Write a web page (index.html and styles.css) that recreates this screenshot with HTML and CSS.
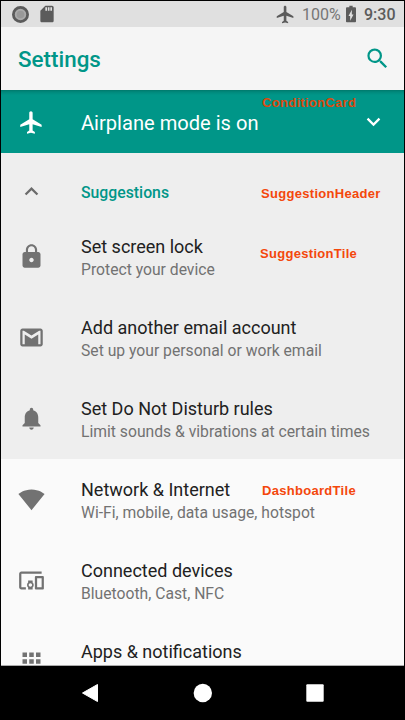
FILE: index.html
```html
<!DOCTYPE html>
<html lang="en">
<head>
<meta charset="utf-8">
<title>Settings</title>
<link rel="stylesheet" href="styles.css">
</head>
<body>
<div class="phone">
  <header class="status">
    <svg class="ring" viewBox="0 0 16 16"><circle cx="8" cy="8" r="6.7" fill="#aaa" stroke="#5b5b5b" stroke-width="2.6"/><circle cx="8" cy="8" r="3.6" fill="#999"/></svg>
    <svg class="sd" viewBox="0 0 24 24"><path d="M18 2h-8L4.020 8 4 20c0 1.100.9 2 2 2h12c1.100 0 2-.9 2-2V4c0-1.100-.9-2-2-2zm-6 6h-2V4h2v4zm3 0h-2V4h2v4zm3 0h-2V4h2v4z"/></svg>
    <svg class="plane-small" viewBox="0 0 24 24"><path d="M21 16v-2l-8-5V3.500C13 2.670 12.330 2 11.500 2S10 2.670 10 3.500V9l-8 5v2l8-2.500V19l-2 1.500V22l3.500-1 3.500 1v-1.500L13 19v-5.500z"/></svg>
    <span class="percent">100%</span>
    <svg class="battery" viewBox="0 0 24 24"><path d="M16.670 4H14V2h-4v2H7.330C6.600 4 6 4.600 6 5.330v15.330C6 21.400 6.600 22 7.330 22h9.330c.74 0 1.340-.6 1.340-1.330V5.330C18 4.600 17.400 4 16.670 4zM11 20v-5.500H9L13 7v5.500h2L11 20z"/></svg>
    <span class="clock">9:30</span>
  </header>
  <div class="appbar">
    <h1>Settings</h1>
    <svg class="icon" viewBox="0 0 24 24"><path d="M15.500 14h-.79l-.28-.27A6.470 6.470 0 0 0 16 9.500 6.500 6.500 0 1 0 9.500 16c1.610 0 3.090-.59 4.230-1.570l.27.28v.79l5 4.990L20.490 19l-4.990-5zm-6 0C7.010 14 5 11.990 5 9.500S7.010 5 9.500 5 14 7.010 14 9.500 11.990 14 9.500 14z"/></svg>
  </div>
  <section class="condition">
    <svg class="icon" viewBox="0 0 24 24"><path d="M21 16v-2l-8-5V3.500C13 2.670 12.330 2 11.500 2S10 2.670 10 3.500V9l-8 5v2l8-2.500V19l-2 1.500V22l3.500-1 3.500 1v-1.500L13 19v-5.500z"/></svg>
    <span class="condition-text">Airplane mode is on</span>
    <svg class="chevron" viewBox="0 0 24 24"><path d="M7.410 7.840 12 12.420l4.590-4.580L18 9.250l-6 6-6-6z"/></svg>
    <span class="note note-card">ConditionCard</span>
  </section>
  <section class="suggestions">
    <div class="suggest-head">
      <svg class="icon" viewBox="0 0 24 24"><path d="M7.410 15.410 12 10.830l4.590 4.580L18 14l-6-6-6 6z"/></svg>
      <span class="head-label">Suggestions</span>
      <span class="note note-header">SuggestionHeader</span>
    </div>
    <div class="tile">
      <svg class="icon" viewBox="0 0 24 24"><path d="M18 8h-1V6c0-2.760-2.240-5-5-5S7 3.240 7 6v2H6c-1.100 0-2 .9-2 2v10c0 1.100.9 2 2 2h12c1.100 0 2-.9 2-2V10c0-1.100-.9-2-2-2zm-6 9c-1.100 0-2-.9-2-2s.9-2 2-2 2 .9 2 2-.9 2-2 2zm3.100-9H8.900V6c0-1.710 1.390-3.100 3.100-3.100S15.100 4.290 15.100 6v2z"/></svg>
      <div class="text"><div class="title">Set screen lock</div><div class="sub">Protect your device</div></div>
      <span class="note note-suggestion">SuggestionTile</span>
    </div>
    <div class="tile">
      <svg class="icon" viewBox="0 0 24 24"><path d="M20 4H4c-1.100 0-2 .9-2 2v12c0 1.100.9 2 2 2h16c1.100 0 2-.9 2-2V6c0-1.100-.9-2-2-2zm0 14h-2V9.250L12 13 6 9.250V18H4V6h1.200l6.800 4.250L18.800 6H20v12z"/></svg>
      <div class="text"><div class="title">Add another email account</div><div class="sub">Set up your personal or work email</div></div>
    </div>
    <div class="tile">
      <svg class="icon" viewBox="0 0 24 24"><path d="M12 22c1.100 0 2-.9 2-2h-4c0 1.100.89 2 2 2zm6-6v-5c0-3.070-1.640-5.640-4.500-6.320V4c0-.83-.67-1.500-1.500-1.500s-1.500.67-1.500 1.500v.68C7.630 5.360 6 7.920 6 11v5l-2 2v1h16v-1l-2-2z"/></svg>
      <div class="text"><div class="title">Set Do Not Disturb rules</div><div class="sub">Limit sounds &amp; vibrations at certain times</div></div>
    </div>
  </section>
  <main class="dashboard">
    <div class="tile">
      <svg class="icon" viewBox="0 0 24 24"><path d="M12 21.500 23.640 7C23.190 6.660 18.710 3 12 3S.81 6.660.36 7z"/></svg>
      <div class="text"><div class="title">Network &amp; Internet</div><div class="sub">Wi-Fi, mobile, data usage, hotspot</div></div>
      <span class="note note-dashboard">DashboardTile</span>
    </div>
    <div class="tile">
      <svg class="icon" viewBox="0 0 24 24"><path d="M3 6h18V4H3c-1.100 0-2 .9-2 2v12c0 1.100.9 2 2 2h4v-2H3V6zm10 6H9v1.780c-.61.55-1 1.330-1 2.220s.39 1.670 1 2.220V20h4v-1.780c.61-.55 1-1.340 1-2.220s-.39-1.670-1-2.220V12zm-2 5.500c-.83 0-1.500-.67-1.500-1.500s.67-1.500 1.500-1.500 1.500.67 1.500 1.500-.67 1.500-1.500 1.500zM22 8h-6c-.5 0-1 .5-1 1v10c0 .5.5 1 1 1h6c.5 0 1-.5 1-1V9c0-.5-.5-1-1-1zm-1 10h-4v-8h4v8z"/></svg>
      <div class="text"><div class="title">Connected devices</div><div class="sub">Bluetooth, Cast, NFC</div></div>
    </div>
    <div class="tile">
      <svg class="icon" viewBox="0 0 24 24"><path d="M4 8h4V4H4v4zm6 12h4v-4h-4v4zm-6 0h4v-4H4v4zm0-6h4v-4H4v4zm6 0h4v-4h-4v4zm6-10v4h4V4h-4zm-6 4h4V4h-4v4zm6 6h4v-4h-4v4zm0 6h4v-4h-4v4z"/></svg>
      <div class="text"><div class="title">Apps &amp; notifications</div><div class="sub"></div></div>
    </div>
  </main>
  <nav class="nav">
    <svg viewBox="0 0 20 20"><path d="M1.500 10 16.500 1.500V18.500z" stroke="#fff" stroke-linejoin="round"/></svg>
    <svg viewBox="0 0 20 20"><circle cx="9.800" cy="10" r="9.200"/></svg>
    <svg viewBox="0 0 20 20"><rect x="1.300" y="1.300" width="17.400" height="17.400" rx="1"/></svg>
  </nav>
</div>
</body>
</html>
```
FILE: styles.css
```css
* { box-sizing: border-box; }
body { margin: 0; font-family: Roboto, sans-serif; background: #000; }
svg { fill: currentColor; flex: none; display: block; }
.phone {
  width: 405px;
  height: 720px;
  padding: 1px 1px 0;
  display: flex;
  flex-direction: column;
  overflow: hidden;
  background: #000;
}
.status {
  height: 26px;
  flex: none;
  display: flex;
  align-items: center;
  padding: 0 9px 0 11px;
  background: #e0e0e0;
  color: #5b5b5b;
  font-size: 16px;
  line-height: 26px;
}
.ring { width: 17px; height: 17px; }
.sd { width: 20px; height: 20px; margin-left: 8px; }
.plane-small { width: 21px; height: 21px; margin-left: auto; }
.percent { width: 39px; margin-left: 6px; padding-top: 1px; color: #757575; }
.battery { width: 20px; height: 20px; }
.clock { width: 31px; margin-left: 3px; padding-top: 1px; font-weight: 500; }
.appbar {
  height: 63px;
  flex: none;
  display: flex;
  align-items: center;
  justify-content: space-between;
  padding: 0 13px 0 17px;
  background: #f5f5f5;
  color: #009688;
}
h1 { margin: 0; padding-top: 1px; font-size: 22.4px; font-weight: 500; line-height: 28px; }
.icon { width: 27px; height: 27px; }
.condition {
  position: relative;
  height: 63px;
  flex: none;
  display: flex;
  align-items: center;
  padding: 1px 17px 0;
  background: linear-gradient(#00796b, #00897c 2px, #009688 5px);
  color: #fff;
}
.condition-text { flex: 1; margin-left: 36px; padding-top: 1px; font-size: 20.1px; }
.chevron { width: 27px; height: 27px; }
.suggestions { height: 306px; flex: none; background: #eee; }
.suggest-head {
  position: relative;
  height: 63px;
  display: flex;
  align-items: center;
  gap: 36px;
  padding: 14px 17px 0;
  color: #009688;
  font-size: 15.8px;
  font-weight: 500;
}
.suggest-head .icon { color: #6b6b6b; }
.head-label { padding-top: 1px; }
.tile {
  position: relative;
  height: 81px;
  display: flex;
  align-items: center;
  gap: 36px;
  padding: 0 17px;
  color: #727272;
  white-space: nowrap;
}
.text { padding-top: 2px; }
.title { color: #212121; font-size: 18px; line-height: 24px; }
.sub { height: 22px; font-size: 15.7px; line-height: 22px; }
.dashboard {
  height: 207px;
  flex: none;
  overflow: hidden;
  background: #fafafa;
  border-bottom: 1px solid #aaa;
}
.nav {
  flex: 1;
  display: flex;
  justify-content: center;
  align-items: center;
  gap: 92px;
  color: #fff;
}
.nav svg { width: 20px; height: 20px; }
.note {
  position: absolute;
  color: #f4470b;
  font: bold 13px/16px "Liberation Sans", sans-serif;
  letter-spacing: 0.3px;
}
.note-card { left: 261px; top: 5px; color: #dc4a0e; }
.note-header { left: 260px; top: 33px; }
.note-suggestion { left: 259px; top: 30px; }
.note-dashboard { left: 261px; top: 24px; }
```
